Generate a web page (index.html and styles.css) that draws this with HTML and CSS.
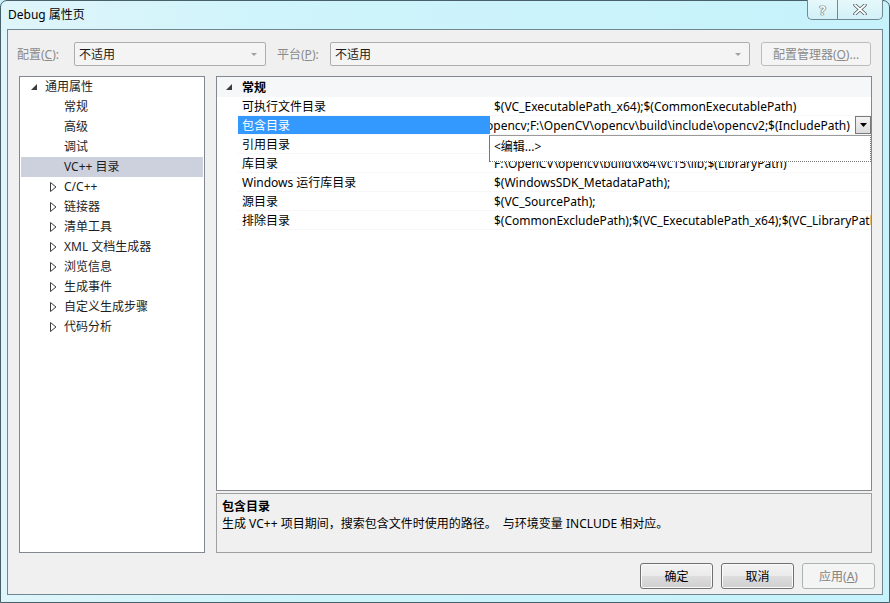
FILE: index.html
```html
<!DOCTYPE html>
<html>
<head>
<meta charset="utf-8">
<link rel="stylesheet" href="styles.css">
</head>
<body>
<div class="window">
  <div class="titlebar">
    <span class="title">Debug 属性页</span>
    <div class="caption-btns">
      <div class="cbtn help">?</div>
      <div class="cbtn close">
        <svg width="14" height="11" viewBox="0 0 14 11"><path d="M2 1 L12 10 M12 1 L2 10" stroke="#4a5a60" stroke-width="3.4" stroke-linecap="round"/><path d="M2 1 L12 10 M12 1 L2 10" stroke="#ffffff" stroke-width="1.8" stroke-linecap="round"/></svg>
      </div>
    </div>
  </div>
  <div class="client">
    <div class="toprow">
      <span class="lbl l1">配置(<u>C</u>):</span>
      <div class="combo c1"><span class="cval">不适用</span><span class="carr"></span></div>
      <span class="lbl l2">平台(<u>P</u>):</span>
      <div class="combo c2"><span class="cval">不适用</span><span class="carr"></span></div>
      <div class="mgr">配置管理器(<u>O</u>)...</div>
    </div>
    <div class="main">
      <div class="tree">
        <div class="titem lv0"><svg class="exp" width="7" height="7" viewBox="0 0 7 7"><polygon points="6,0 6,6 0,6" fill="#3c3c3c"/></svg>通用属性</div>
        <div class="titem lv1">常规</div>
        <div class="titem lv1">高级</div>
        <div class="titem lv1">调试</div>
        <div class="titem lv1 sel">VC++ 目录</div>
        <div class="titem lv1c"><svg class="col" width="7" height="10" viewBox="0 0 7 10"><polygon points="0.5,0.5 6,5 0.5,9.5" fill="none" stroke="#3c3c3c" stroke-width="1"/></svg>C/C++</div>
        <div class="titem lv1c"><svg class="col" width="7" height="10" viewBox="0 0 7 10"><polygon points="0.5,0.5 6,5 0.5,9.5" fill="none" stroke="#3c3c3c" stroke-width="1"/></svg>链接器</div>
        <div class="titem lv1c"><svg class="col" width="7" height="10" viewBox="0 0 7 10"><polygon points="0.5,0.5 6,5 0.5,9.5" fill="none" stroke="#3c3c3c" stroke-width="1"/></svg>清单工具</div>
        <div class="titem lv1c"><svg class="col" width="7" height="10" viewBox="0 0 7 10"><polygon points="0.5,0.5 6,5 0.5,9.5" fill="none" stroke="#3c3c3c" stroke-width="1"/></svg>XML 文档生成器</div>
        <div class="titem lv1c"><svg class="col" width="7" height="10" viewBox="0 0 7 10"><polygon points="0.5,0.5 6,5 0.5,9.5" fill="none" stroke="#3c3c3c" stroke-width="1"/></svg>浏览信息</div>
        <div class="titem lv1c"><svg class="col" width="7" height="10" viewBox="0 0 7 10"><polygon points="0.5,0.5 6,5 0.5,9.5" fill="none" stroke="#3c3c3c" stroke-width="1"/></svg>生成事件</div>
        <div class="titem lv1c"><svg class="col" width="7" height="10" viewBox="0 0 7 10"><polygon points="0.5,0.5 6,5 0.5,9.5" fill="none" stroke="#3c3c3c" stroke-width="1"/></svg>自定义生成步骤</div>
        <div class="titem lv1c"><svg class="col" width="7" height="10" viewBox="0 0 7 10"><polygon points="0.5,0.5 6,5 0.5,9.5" fill="none" stroke="#3c3c3c" stroke-width="1"/></svg>代码分析</div>
      </div>
      <div class="right">
        <div class="grid">
          <div class="ghead"><span class="gutter"><svg width="7" height="7" viewBox="0 0 7 7"><polygon points="6,0 6,6 0,6" fill="#3c3c3c"/></svg></span><b>常规</b></div>
          <div class="grow"><span class="gutter"></span><span class="gname">可执行文件目录</span><span class="gval">$(VC_ExecutablePath_x64);$(CommonExecutablePath)</span></div>
          <div class="grow"><span class="gutter"></span><span class="gname gsel">包含目录</span><span class="gval gedit"><span class="etext">opencv;F:\OpenCV\opencv\build\include\opencv2;$(IncludePath)</span><span class="ddbtn"><svg width="7" height="4" viewBox="0 0 7 4"><polygon points="0,0 7,0 3.5,4" fill="#000"/></svg></span></span></div>
          <div class="grow"><span class="gutter"></span><span class="gname">引用目录</span><span class="gval"></span></div>
          <div class="grow"><span class="gutter"></span><span class="gname">库目录</span><span class="gval">F:\OpenCV\opencv\build\x64\vc15\lib;$(LibraryPath)</span></div>
          <div class="grow"><span class="gutter"></span><span class="gname">Windows 运行库目录</span><span class="gval">$(WindowsSDK_MetadataPath);</span></div>
          <div class="grow"><span class="gutter"></span><span class="gname">源目录</span><span class="gval">$(VC_SourcePath);</span></div>
          <div class="grow"><span class="gutter"></span><span class="gname">排除目录</span><span class="gval">$(CommonExcludePath);$(VC_ExecutablePath_x64);$(VC_LibraryPath)</span></div>
          <div class="dropdown"><span>&lt;编辑...&gt;</span></div>
        </div>
        <div class="desc">
          <div class="dtitle">包含目录</div>
          <div class="dtext">生成 VC++ 项目期间，搜索包含文件时使用的路径。 &nbsp;与环境变量 INCLUDE 相对应。</div>
        </div>
      </div>
    </div>
    <div class="buttons">
      <div class="btn">确定</div>
      <div class="btn">取消</div>
      <div class="btn dis">应用(<u>A</u>)</div>
    </div>
  </div>
</div>
</body>
</html>
```

FILE: styles.css
```css
* { box-sizing: border-box; }
html, body { margin: 0; padding: 0; background: #c8eef7; }
body { font-family: "Noto Sans", "Noto Sans CJK SC", sans-serif; font-size: 12px; color: #000; }

.window {
  width: 890px; height: 603px;
  border: 1px solid #47606a;
  border-radius: 7px 7px 0 0;
  background: linear-gradient(90deg, #dff5fa 0%, #cff4fb 30%, #c6f2fb 100%);
  display: flex; flex-direction: column;
  position: relative;
}
.titlebar {
  height: 28px;
  display: flex; align-items: flex-start;
  position: relative;
}
.title { margin: 6px 0 0 7px; font-size: 12px; line-height: 16px; color: #000; }
.caption-btns { position: absolute; top: -1px; right: 6px; display: flex; }
.cbtn {
  height: 20px; border: 1px solid #6f8a94; border-top: none;
  background: linear-gradient(#e6f8fb, #d2f1f7);
  display: flex; align-items: center; justify-content: center;
  color: #fff; font-weight: bold; font-size: 13px;
  text-shadow: 0 0 1px #3d4d52, 0 0 1px #3d4d52, 0 0 1px #3d4d52;
}
.help { width: 30px; border-radius: 0 0 0 5px; border-right: none; }
.close { width: 46px; border-radius: 0 0 5px 0; }

.client {
  margin: 0 6px 7px 6px;
  flex: 1;
  border: 1px solid #6f8790;
  background: #f0f0f0;
  display: flex; flex-direction: column;
}
.toprow { display: flex; align-items: center; height: 24px; margin-top: 12px; }
.lbl { color: #8a8a8a; white-space: nowrap; }
.lbl u { text-decoration: underline; }
.l1 { width: 66px; padding-left: 9px; }
.l2 { width: 53px; margin-left: 11px; }
.combo {
  height: 24px; border: 1px solid #adadad; border-radius: 2px;
  background: #f4f4f4;
  display: flex; align-items: center; justify-content: space-between;
  padding: 0 8px 0 4px;
}
.c1 { width: 192px; }
.c2 { width: 420px; }
.cval { color: #1a1a1a; }
.carr { width: 0; height: 0; border-left: 3px solid transparent; border-right: 3px solid transparent; border-top: 3px solid #a0a0a0; }
.mgr {
  margin-left: 11px; width: 110px; height: 24px;
  border: 1px solid #bcbcbc; border-radius: 3px; background: #f4f4f4;
  color: #8a8a8a; display: flex; align-items: center; justify-content: center;
  white-space: nowrap;
}

.main { display: flex; height: 477px; margin-top: 10px; padding-left: 11px; }
.tree {
  width: 186px; border: 1px solid #828790; background: #fff;
  display: flex; flex-direction: column;
}
.titem { height: 20px; line-height: 20px; display: flex; align-items: center; white-space: nowrap; color: #1e1e1e; }
.lv0 { padding-left: 11px; }
.lv0 .exp { margin-right: 7px; }
.lv1 { padding-left: 44px; }
.lv1c { padding-left: 30px; }
.lv1c .col { margin-right: 7px; }
.sel { background: #cdd1dd; margin: 0 1px; padding-left: 43px; }

.right { width: 656px; margin-left: 11px; display: flex; flex-direction: column; }
.grid {
  height: 415px; border: 1px solid #828790; background: #fff;
  position: relative; overflow: hidden;
}
.ghead { height: 20px; display: flex; align-items: center; background: #f6f7f9; }
.ghead b { padding-left: 4px; font-weight: bold; }
.gutter { width: 21px; flex: none; display: flex; align-items: center; padding-left: 9px; }
.grow { height: 19px; display: flex; align-items: stretch; }
.gname { width: 252px; flex: none; padding-left: 4px; line-height: 19px; white-space: nowrap; border-bottom: 1px solid #f7f7f7; }
.gsel { background: #3399ff; color: #fff; }
.gval { flex: 1; padding-left: 4px; line-height: 19px; white-space: nowrap; overflow: hidden; border-bottom: 1px solid #f7f7f7; }
.gedit { position: relative; padding-left: 0; display: flex; }
.etext { flex: 1; overflow: hidden; text-indent: -4px; line-height: 19px; padding-right: 2px; }
.ddbtn {
  width: 16px; height: 18px; border: 1px solid #7a7a7a; background: linear-gradient(#f4f4f4, #dcdcdc);
  display: flex; align-items: center; justify-content: center;
}
.dropdown {
  position: absolute; left: 272px; top: 58px; width: 382px; height: 27px;
  background: #fff; border: 1px dotted #777; border-left: 1px solid #777; border-top: 1px solid #9a9a9a;
  padding-left: 4px; line-height: 22px;
}

.desc {
  margin-top: 2px; flex: 1; border: 1px solid #a0a0a0; background: #f0f0f0;
  padding: 4px 0 0 5px;
}
.dtitle { font-weight: bold; line-height: 17px; }
.dtext { line-height: 18px; }

.buttons { display: flex; justify-content: flex-end; margin-top: 10px; padding-right: 7px; gap: 8px; }
.btn {
  width: 73px; height: 26px; border: 1px solid #707070; border-radius: 3px;
  background: linear-gradient(#f2f2f2 0%, #ebebeb 48%, #dddddd 52%, #cfcfcf 100%);
  display: flex; align-items: center; justify-content: center; color: #000;
  box-shadow: inset 0 0 0 1px #fbfbfb;
}
.btn.dis { border-color: #adb2b5; background: #f4f4f4; color: #838383; box-shadow: none; }
```
